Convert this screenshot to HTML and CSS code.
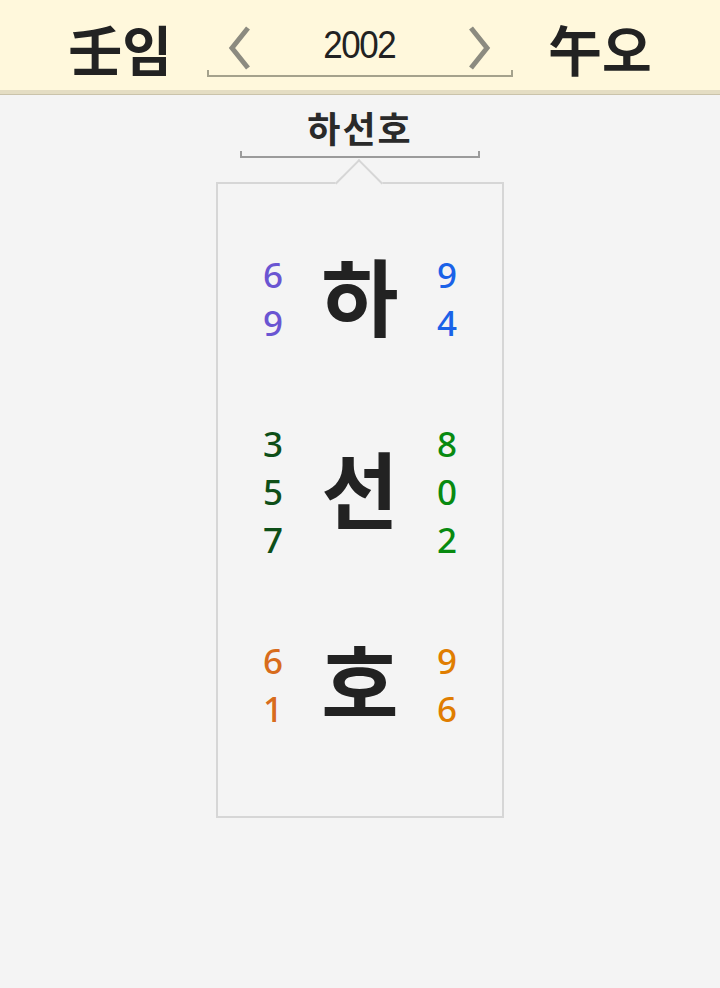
FILE: index.html
```html
<!DOCTYPE html>
<html lang="ko">
<head>
<meta charset="utf-8">
<title>하선호</title>
<link rel="stylesheet" href="styles.css">
</head>
<body>
<header class="header">
  <div class="ganji">壬임</div>
  <div class="nav">
    <div class="nav-row">
      <svg class="chev" width="26" height="44" viewBox="0 0 26 44"><polyline points="22,2 6,22 22,42" fill="none" stroke="#8c8b80" stroke-width="5"/></svg>
      <span class="year">2002</span>
      <svg class="chev" width="26" height="44" viewBox="0 0 26 44"><polyline points="4,2 20,22 4,42" fill="none" stroke="#8c8b80" stroke-width="5"/></svg>
    </div>
    <div class="nav-bracket"></div>
  </div>
  <div class="ganji">午오</div>
</header>
<main class="main">
  <div class="title">하선호</div>
  <div class="title-bracket"></div>
  <div class="card">
    <div class="row">
      <div class="digits c-purple"><span>6</span><span>9</span></div>
      <div class="hangul">하</div>
      <div class="digits c-blue"><span>9</span><span>4</span></div>
    </div>
    <div class="row">
      <div class="digits c-dkgreen"><span>3</span><span>5</span><span>7</span></div>
      <div class="hangul">선</div>
      <div class="digits c-green"><span>8</span><span>0</span><span>2</span></div>
    </div>
    <div class="row">
      <div class="digits c-orange1"><span>6</span><span>1</span></div>
      <div class="hangul">호</div>
      <div class="digits c-orange2"><span>9</span><span>6</span></div>
    </div>
  </div>
</main>
</body>
</html>
```
FILE: styles.css
```css
html, body {
  margin: 0;
  padding: 0;
}
body {
  background: #f4f4f4;
  font-family: "Noto Sans CJK KR", "Noto Sans", sans-serif;
  color: #222;
}
.header {
  height: 90px;
  background: #fff8dc;
  border-bottom: 4px solid #e4ddc3;
  box-shadow: 0 1px 0 #cac3aa;
  display: flex;
  justify-content: center;
  align-items: flex-start;
  gap: 35px;
}
.ganji {
  font-size: 54px;
  font-weight: 700;
  line-height: 1;
  margin-top: 22px;
  color: #222;
}
.nav {
  width: 306px;
  margin-top: 20px;
  display: flex;
  flex-direction: column;
}
.nav-row {
  height: 50px;
  display: flex;
  align-items: center;
  justify-content: space-between;
  padding: 0 20px 0 19px;
}
.chev {
  display: block;
  margin-top: 6px;
}
.year {
  font-family: "Liberation Sans", Arial, sans-serif;
  font-size: 38px;
  letter-spacing: -1.5px;
  transform: scaleX(0.92);
  color: #222;
  line-height: 1;
}
.nav-bracket {
  height: 5px;
  border: 2px solid #a5a28c;
  border-top: 0;
}
.main {
  display: flex;
  flex-direction: column;
  align-items: center;
  padding-top: 10px;
}
.title {
  font-size: 36px;
  font-weight: 700;
  letter-spacing: 2px;
  line-height: 1.3;
  color: #2a2a2a;
}
.title-bracket {
  width: 236px;
  height: 5px;
  border: 2px solid #9b9b9b;
  border-top: 0;
}
.card {
  position: relative;
  margin-top: 24px;
  width: 284px;
  border: 2px solid #d6d6d6;
  padding: 67px 0 83px;
  display: flex;
  flex-direction: column;
  gap: 73px;
}
.card::before {
  content: "";
  position: absolute;
  left: 124px;
  top: -18px;
  width: 34px;
  height: 34px;
  box-sizing: border-box;
  background: #f4f4f4;
  border-top: 2px solid #d6d6d6;
  border-left: 2px solid #d6d6d6;
  transform: rotate(45deg);
}
.row {
  display: grid;
  grid-template-columns: 30px 84px 30px;
  column-gap: 30px;
  justify-content: center;
  align-items: center;
}
.digits {
  display: flex;
  flex-direction: column;
  align-items: center;
  font-family: "Noto Sans", sans-serif;
  font-size: 35px;
  font-weight: 500;
  line-height: 48px;
}
.hangul {
  font-size: 84px;
  font-weight: 700;
  line-height: 1;
  margin-bottom: 10px;
  text-align: center;
  color: #222;
}
.c-purple { color: #6a55d2; }
.c-blue { color: #1a62e8; }
.c-dkgreen { color: #0e4f18; }
.c-green { color: #088a10; }
.c-orange1 { color: #d86c1c; }
.c-orange2 { color: #e07d00; }
```
